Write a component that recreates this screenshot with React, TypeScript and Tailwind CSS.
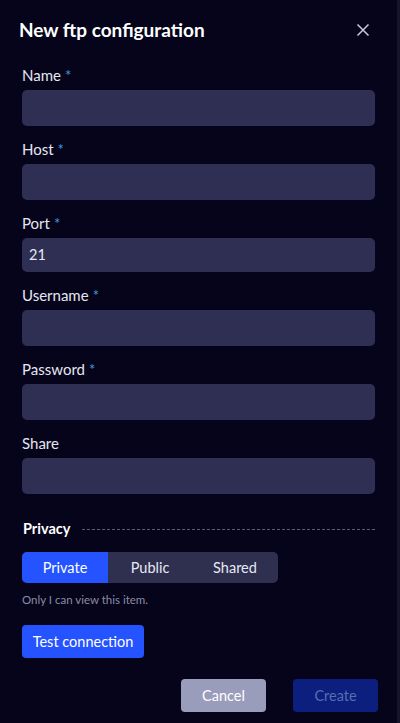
import React from "react";

const fields = [
  { label: "Name", required: true, value: "", h: "h-[36px]" },
  { label: "Host", required: true, value: "", h: "h-[36px]" },
  { label: "Port", required: true, value: "21", h: "h-[34px]" },
  { label: "Username", required: true, value: "", h: "h-[36px]" },
  { label: "Password", required: true, value: "", h: "h-[36px]" },
  { label: "Share", required: false, value: "", h: "h-[36px]" },
];

const App = () => {
  return (
    <div className="flex h-[723px] w-[400px] bg-[#05041b] font-['Lato',sans-serif] text-white">
      <div className="flex flex-1 flex-col px-[22px]">
        {/* Header */}
        <div className="mt-[18px] flex items-center justify-between">
          <h1 className="-ml-[3px] text-[19px] font-bold leading-[24px]">New ftp configuration</h1>
          <button className="mr-[5px] text-[#c9c9dc]">
            <svg width="14" height="14" viewBox="0 0 14 14" fill="none" stroke="currentColor" strokeWidth="1.5">
              <path d="M1.5 1.5 12.5 12.5M12.5 1.5 1.5 12.5" />
            </svg>
          </button>
        </div>

        {/* Fields */}
        <div className="mt-[25px] flex flex-col gap-[15px]">
          {fields.map((f) => (
            <div key={f.label} className="flex flex-col">
              <label className="text-[15px] leading-[17px] text-[#e6e6f0]">
                {f.label}
                {f.required && <span className="ml-1 text-[#3c9fdc]">*</span>}
              </label>
              <div
                className={`mt-[6px] flex items-center rounded-[5px] bg-[#2e2f53] px-[7px] text-[14.5px] text-[#e8e8f2] ${f.h}`}
              >
                {f.value}
              </div>
            </div>
          ))}
        </div>

        {/* Privacy */}
        <div className="mt-[26px] flex items-center gap-[12px]">
          <span className="ml-[1px] text-[14.5px] font-bold leading-[17px]">Privacy</span>
          <div className="mt-[1px] flex-1 border-t border-dashed border-[#5b5b78]" />
        </div>

        <div className="mt-[15px] flex h-[31px] w-[256px] overflow-hidden rounded-[5px] bg-[#2f2f4f] text-[14.5px]">
          <div className="flex w-[86px] items-center justify-center bg-[#2553ff]">Private</div>
          <div className="flex w-[84px] items-center justify-center text-[#e8e8f2]">Public</div>
          <div className="flex flex-1 items-center justify-center text-[#e8e8f2]">Shared</div>
        </div>

        <p className="mt-[10px] text-[11.5px] leading-[14px] text-[#8c8ca4]">Only I can view this item.</p>

        <button className="mt-[18px] h-[33px] w-[122px] rounded-[4px] bg-[#2553ff] text-[14.5px] text-white">
          Test connection
        </button>

        {/* Footer */}
        <div className="mt-[21px] -mr-[3px] flex justify-end gap-[27px]">
          <button className="h-[33px] w-[85px] rounded-[4px] bg-[#9a9cbb] text-[14.5px] text-white">Cancel</button>
          <button className="h-[33px] w-[85px] rounded-[4px] bg-[#0c1f7e] text-[14.5px] text-[#5a6cb0]">Create</button>
        </div>
      </div>
      <div className="w-[3px] bg-[#15142a]" />
    </div>
  );
};

export default App;
